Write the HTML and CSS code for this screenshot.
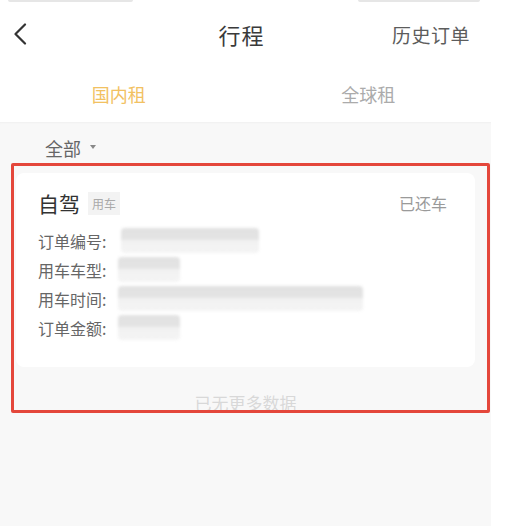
FILE: index.html
```html
<!DOCTYPE html>
<html lang="zh">
<head>
<meta charset="utf-8">
<title>行程</title>
<link rel="stylesheet" href="styles.css">
</head>
<body>
<div class="app">
  <div class="status">
    <span class="blob blob-left"></span>
    <span class="blob blob-right"></span>
  </div>
  <header class="navbar">
    <div class="nav-left">
      <svg class="back" width="14" height="22" viewBox="0 0 14 22"><polyline points="12,1.5 2.5,11 12,20.5" fill="none" stroke="#333" stroke-width="2.2" stroke-linecap="round" stroke-linejoin="round"/></svg>
    </div>
    <div class="nav-title">行程</div>
    <div class="nav-right">历史订单</div>
  </header>
  <nav class="tabs">
    <div class="tab tab-active">国内租</div>
    <div class="tab">全球租</div>
  </nav>
  <main class="content">
    <div class="filter">全部<span class="caret"></span></div>
    <section class="card">
      <div class="card-head">
        <div class="card-title">自驾<span class="tag">用车</span></div>
        <div class="card-status">已还车</div>
      </div>
      <div class="row"><span class="label">订单编号:</span><span class="blur blur-order"></span></div>
      <div class="row"><span class="label">用车车型:</span><span class="blur blur-short"></span></div>
      <div class="row"><span class="label">用车时间:</span><span class="blur blur-long"></span></div>
      <div class="row"><span class="label">订单金额:</span><span class="blur blur-short"></span></div>
    </section>
    <div class="nomore">已无更多数据</div>
    <div class="highlight"></div>
  </main>
</div>
</body>
</html>
```
FILE: styles.css
```css
html, body {
  margin: 0;
  padding: 0;
  background: #ffffff;
  font-family: "Noto Sans CJK SC", "Noto Sans", sans-serif;
}

.app {
  width: 491px;
  height: 526px;
  display: flex;
  flex-direction: column;
}

.status {
  height: 3px;
  display: flex;
  justify-content: space-between;
  padding: 0 11px 0 8px;
}

.blob {
  display: block;
  height: 2px;
  background: #e6e6e6;
  border-radius: 0 0 3px 3px;
}

.blob-left { width: 125px; }
.blob-right { width: 122px; margin-left: auto; }

.navbar {
  height: 62px;
  display: grid;
  grid-template-columns: 1fr auto 1fr;
  align-items: center;
  padding: 0 21px 0 13px;
}

.nav-left {
  display: flex;
  align-items: center;
}

.back { display: block; }

.nav-title {
  font-size: 22px;
  color: #3a3a3a;
  letter-spacing: 1px;
}

.nav-right {
  justify-self: end;
  font-size: 19px;
  color: #5c5c5c;
  letter-spacing: 0.5px;
}

.tabs {
  height: 57px;
  display: grid;
  grid-template-columns: 1fr 1fr;
  align-items: center;
  justify-items: center;
}

.tab {
  font-size: 18px;
  color: #ababab;
}

.tab-active {
  color: #f2c162;
  margin-right: 8px;
}

.content {
  position: relative;
  flex: 1;
  background: #f8f8f8;
  box-shadow: inset 0 2px 2px -1px #f0f0f0;
  display: flex;
  flex-direction: column;
}

.filter {
  height: 51px;
  display: flex;
  align-items: center;
  padding-left: 45px;
  font-size: 18px;
  color: #666;
}

.caret {
  width: 0;
  height: 0;
  border-left: 3px solid transparent;
  border-right: 3px solid transparent;
  border-top: 4px solid #888;
  margin-left: 9px;
  margin-top: -2px;
}

.card {
  margin-left: 16px;
  width: 459px;
  box-sizing: border-box;
  background: #fff;
  border-radius: 8px;
  padding: 16px 22px 25px 22px;
}

.card-head {
  display: flex;
  justify-content: space-between;
  align-items: center;
  height: 28px;
  margin-bottom: 9px;
}

.card-title {
  display: flex;
  align-items: center;
  font-size: 21px;
  color: #333;
}

.tag {
  margin-left: 8px;
  background: #f3f3f3;
  color: #aaa;
  font-size: 12px;
  line-height: 23px;
  padding: 0 4px;
}

.card-status {
  font-size: 16px;
  color: #9a9a9a;
  margin-right: 6px;
}

.row {
  height: 29px;
  display: flex;
  align-items: center;
  font-size: 16px;
  color: #666;
}

.label { width: 80px; flex: none; }

.blur {
  display: block;
  height: 25px;
  background: linear-gradient(to bottom, #e1e1e1 0%, #e4e4e4 50%, #f1f1f1 50%, #f4f4f4 100%);
  filter: blur(1.5px);
  border-radius: 4px;
}

.blur-order { width: 138px; margin-left: 3px; }
.blur-short { width: 62px; }
.blur-long { width: 245px; }

.nomore {
  margin-top: 24px;
  text-align: center;
  font-size: 17px;
  line-height: 24px;
  color: #d8d8d8;
}

.highlight {
  position: absolute;
  left: 11px;
  top: 41px;
  width: 479px;
  height: 250px;
  box-sizing: border-box;
  border: 3px solid #e4473b;
  border-radius: 2px;
  pointer-events: none;
}
```
